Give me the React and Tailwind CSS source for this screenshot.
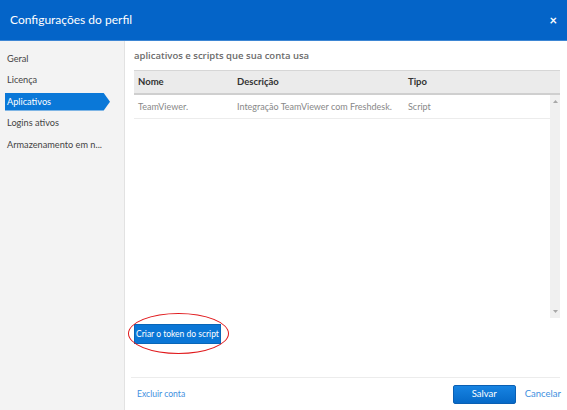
import React from "react";

const menu = ["Geral", "Licença", "Aplicativos", "Logins ativos", "Armazenamento em n..."];

export default function App() {
  return (
    <div className="w-[567px] h-[410px] flex flex-col bg-white overflow-hidden font-['Lato','Open_Sans',sans-serif] text-[#333]">
      {/* Header */}
      <div className="h-[41px] shrink-0 bg-[#0464c8] flex items-center justify-between pl-[10px] pr-[10px] border-b border-[#3d86d4]">
        <h1 className="text-[12px] text-white">Configurações do perfil</h1>
        <span className="text-white text-[13px] font-bold leading-none">×</span>
      </div>

      <div className="flex flex-1 min-h-0">
        {/* Sidebar */}
        <div className="w-[125px] shrink-0 bg-[#f3f3f3] border-r border-[#e2e2e2] pt-[9px] pl-[5px]">
          <ul className="flex flex-col gap-[4px]">
            {menu.map((item) =>
              item === "Aplicativos" ? (
                <li
                  key={item}
                  className="h-[17.5px] w-[105px] bg-[#0a78d8] text-white text-[9.2px] flex items-center pl-[2px] [clip-path:polygon(0_0,94%_0,100%_50%,94%_100%,0_100%)]"
                >
                  {item}
                </li>
              ) : (
                <li key={item} className="h-[17.5px] text-[9.2px] text-[#444] flex items-center pl-[2px] whitespace-nowrap">
                  {item}
                </li>
              )
            )}
          </ul>
        </div>

        {/* Main */}
        <div className="flex-1 flex flex-col pl-[9px] pr-[7px]">
          <p className="font-['Open_Sans',sans-serif] text-[9.5px] font-semibold text-[#6b6b6b] mt-[8px] mb-[7px] leading-[14px]">
            aplicativos e scripts que sua conta usa
          </p>

          <div className="flex flex-col">
            <div className="h-[25px] bg-[#ebebeb] border-t border-[#d6d6d6] border-b-2 border-b-[#cfcfcf] flex items-center text-[9.5px] font-bold text-[#333]">
              <span className="w-[99px] pl-[4px]">Nome</span>
              <span className="w-[171px] pl-[4px]">Descrição</span>
              <span className="pl-[4px]">Tipo</span>
            </div>
            <div className="flex h-[223px]">
              <div className="flex-1">
                <div className="h-[24px] border-b border-[#ececec] flex items-center text-[9px] text-[#888] whitespace-nowrap">
                  <span className="w-[99px] pl-[4px]">TeamViewer.</span>
                  <span className="w-[171px] pl-[4px]">Integração TeamViewer com Freshdesk.</span>
                  <span className="pl-[4px]">Script</span>
                </div>
              </div>
              <div className="w-[10px] bg-[#f0f0f0] flex flex-col items-center justify-between py-[5px]">
                <svg width="5" height="3" viewBox="0 0 5 3"><path d="M0 3L2.5 0L5 3Z" fill="#a8a8a8" /></svg>
                <svg width="5" height="3" viewBox="0 0 5 3"><path d="M0 0L2.5 3L5 0Z" fill="#a8a8a8" /></svg>
              </div>
            </div>
          </div>

          <div className="mt-[6px] relative flex w-fit">
            <button className="h-[20px] w-[87px] bg-[#0a76d6] text-white text-[8.5px] leading-none border border-[#0866b8] whitespace-nowrap">
              Criar o token do script
            </button>
            <div className="absolute left-[-6px] top-[-11px] w-[101px] h-[41px] rounded-[50%] border-[1.5px] border-[#e0181b]" />
          </div>

          <div className="mt-auto border-t border-[#ececec] ml-[-3px] h-[33px] flex items-center justify-between">
            <span className="text-[8.6px] text-[#3e8fe0] pl-[6px]">Excluir conta</span>
            <div className="flex items-center gap-[9px]">
              <button className="w-[63px] h-[19px] rounded-[2px] bg-gradient-to-b from-[#1784e2] to-[#0669c8] border border-[#0a5fb3] text-white text-[9.5px]">
                Salvar
              </button>
              <span className="text-[9.5px] text-[#3e8fe0] mr-[-1px]">Cancelar</span>
            </div>
          </div>
        </div>
      </div>
    </div>
  );
}
